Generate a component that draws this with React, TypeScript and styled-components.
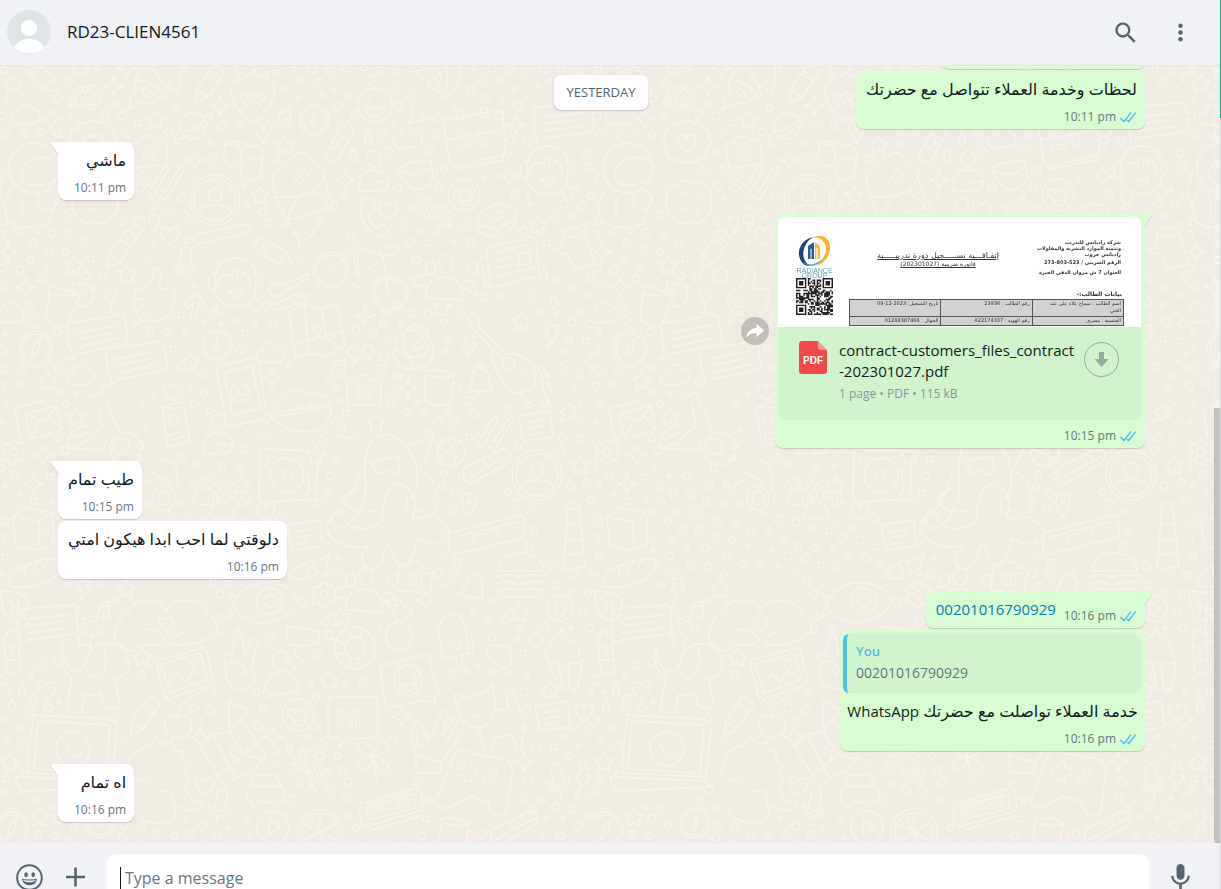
import React from 'react';
import styled, { createGlobalStyle } from 'styled-components';

const GlobalStyle = createGlobalStyle`
  *, *::before, *::after { box-sizing: border-box; }
  html, body, #root { height: 100%; }
  body {
    margin: 0;
    overflow: hidden;
    background: #f0f2f5;
    color: #111b21;
    font-family: 'Open Sans', 'Noto Sans', 'DejaVu Sans', sans-serif;
    font-size: 15px;
  }
  button { border: 0; padding: 0; background: none; color: inherit; font: inherit; cursor: pointer; }
`;

/* ---------- page shell ---------- */

const Shell = styled.div`
  display: flex;
  height: 100vh;
`;

const Column = styled.main`
  display: flex;
  flex: 1;
  flex-direction: column;
  min-width: 0;
`;

const EdgeStrip = styled.div`
  flex: 0 0 1px;
  background: linear-gradient(#00a884 0 118px, #d9dbdd 118px);
`;

const Header = styled.header`
  display: flex;
  flex: 0 0 66px;
  align-items: center;
  gap: 16px;
  padding: 0 26px 1px 7px;
  border-bottom: 1px solid #e6e7ea;
  background: #f0f2f6;
`;

const ContactName = styled.h1`
  flex: 1;
  margin: 0;
  font-size: 17px;
  font-weight: 400;
  line-height: 24px;
`;

const HeaderActions = styled.div`
  display: flex;
  gap: 28px;
  color: #54656f;
`;

const IconButton = styled.button`
  display: flex;
  color: #54656f;
`;

/* ---------- conversation ---------- */

const Chat = styled.section`
  position: relative;
  display: flex;
  flex: 1;
  min-height: 0;
  overflow: hidden;
  background: #efeae2;
`;

const Wallpaper = styled.svg`
  position: absolute;
  inset: 0;
  width: 100%;
  height: 100%;
`;

const Messages = styled.div`
  position: relative;
  display: flex;
  flex: 1;
  flex-direction: column;
  justify-content: flex-end;
  min-width: 0;
  padding: 0 69px 21px 58px;
`;

const DatePill = styled.time`
  position: absolute;
  top: 9px;
  left: 50%;
  transform: translateX(-50%);
  margin-left: -9px;
  padding: 0 13px;
  border-radius: 8px;
  background: #fff;
  box-shadow: 0 1px 1px rgba(11, 20, 26, 0.16);
  color: #54656f;
  font-size: 13px;
  line-height: 35px;
`;

const ScrollTrack = styled.div`
  position: relative;
  display: flex;
  flex: 0 0 6px;
  flex-direction: column;
  justify-content: flex-end;
  background: rgba(255, 255, 255, 0.2);
`;

const ScrollThumb = styled.div`
  height: 56%;
  background: #c5c2be;
`;

const Row = styled.div<{ $out?: boolean; $first?: boolean }>`
  display: flex;
  flex: none;
  align-items: center;
  justify-content: ${(p) => (p.$out ? 'flex-end' : 'flex-start')};
  gap: 6px;
  margin-top: ${(p) => (p.$first ? 13 : 2)}px;
`;

const Bubble = styled.article<{ $out?: boolean; $tail?: boolean; $flush?: boolean }>`
  position: relative;
  padding: ${(p) => (p.$flush ? '4px 4px 0 3px' : '6px 8px 0 10px')};
  border-radius: 8px;
  ${(p) => p.$tail && (p.$out ? 'border-top-right-radius: 0;' : 'border-top-left-radius: 0;')}
  background: ${(p) => (p.$out ? '#d9fdd3' : '#fff')};
  box-shadow: 0 1px 1px rgba(11, 20, 26, 0.17);
`;

const StampOnlyBubble = styled(Bubble)`
  width: 204px;
`;

const TailShape = styled.svg<{ $out?: boolean }>`
  position: absolute;
  top: 0;
  ${(p) => (p.$out ? 'right: -8px;' : 'left: -8px; transform: scaleX(-1);')}
  width: 9px;
  height: 14px;
  overflow: visible;
`;

const ArabicText = styled.p`
  margin: 0;
  font-family: 'Open Sans', 'DejaVu Sans', sans-serif;
  font-size: 16px;
  line-height: 24px;
  white-space: nowrap;
`;

const LatinWord = styled.bdi`
  font-size: 15px;
`;

const Meta = styled.div<{ $inset?: boolean }>`
  display: flex;
  align-items: center;
  justify-content: flex-end;
  gap: 3px;
  height: 28px;
  padding: 4px ${(p) => (p.$inset ? 4 : 0)}px 0 6px;
  color: #667781;
  font-size: 12px;
  line-height: 16px;
  white-space: nowrap;
`;

const PhoneLine = styled.div`
  display: flex;
  align-items: flex-start;
  gap: 2px;
  height: 30px;
`;

const PhoneStamp = styled.div`
  align-self: flex-end;
`;

const PhoneLink = styled.a`
  color: #027eb5;
  font-size: 15px;
  line-height: 22px;
  text-decoration: none;
`;

const Quote = styled.blockquote`
  width: 298px;
  margin: 0;
  padding: 7px 9px 8px;
  border-left: 4px solid #53bdeb;
  border-radius: 6px;
  background: #d1f4cc;
  color: #667781;
  font-size: 14px;
  line-height: 24px;
`;

const QuoteAuthor = styled.strong`
  display: block;
  color: #53bdeb;
  font-size: 13px;
  font-weight: 600;
  line-height: 20px;
`;

const QuoteReply = styled.div`
  padding: 6px 3px 0 0;
`;

const ForwardButton = styled.button`
  display: flex;
  align-items: center;
  justify-content: center;
  width: 28px;
  height: 28px;
  border-radius: 50%;
  background: #c1beb8;
`;

/* ---------- attached document ---------- */

const DocumentCard = styled.div`
  width: 363px;
  overflow: hidden;
  border-radius: 6px;
  background: #d1f4cc;
`;

const Preview = styled.div`
  display: grid;
  grid-template-columns: 37px 1fr;
  gap: 16px;
  height: 110px;
  padding: 18px 17px 0 18px;
  overflow: hidden;
  background: #fff;
  color: #333;
  font-family: 'DejaVu Sans', sans-serif;
  font-size: 6px;
  line-height: 8px;
  white-space: nowrap;
  filter: blur(0.3px);
`;

const BrandColumn = styled.div`
  display: flex;
  flex-direction: column;
  align-items: center;
`;

const BrandName = styled.div`
  color: #5c9cb8;
  font-family: 'Liberation Sans', sans-serif;
  font-size: 7px;
  line-height: 5px;
  text-align: center;
`;

const PaperHead = styled.div`
  display: grid;
  grid-template-columns: 1fr auto;
  height: 64px;
`;

const PaperTitle = styled.div`
  padding: 17px 10px 0 0;
  font-size: 8px;
  text-align: center;
  text-decoration: underline;
`;

const PaperSubtitle = styled.div`
  font-size: 6px;
`;

const PaperIssuer = styled.div`
  padding: 4px 3px 0 0;
  font-size: 5px;
  font-weight: 700;
  line-height: 6px;
  text-align: right;
`;

const IssuerDetail = styled.div`
  line-height: 10px;
`;

const PaperTable = styled.table`
  width: 275px;
  border-collapse: collapse;
  background: #d2d2d2;
  font-size: 5px;
  line-height: 7px;
  table-layout: fixed;

  td { padding: 0 2px; border: 1px solid #555; text-align: right; vertical-align: top; }
  tr:first-child td { height: 17px; }
  tr:last-child td { height: 9px; }
`;

const PaperSection = styled.div`
  padding-right: 2px;
  margin-top: -10px;
  font-size: 6px;
  font-weight: 700;
  line-height: 10px;
  text-align: right;
`;

const FileInfo = styled.div`
  display: flex;
  align-items: flex-start;
  height: 93px;
  padding: 13px 22px 0 21px;
`;

const FileText = styled.div`
  flex: 1;
  min-width: 0;
  padding-left: 12px;
`;

const FileName = styled.div`
  font-size: 15px;
  line-height: 21px;
`;

const FileMeta = styled.div`
  margin-top: 3px;
  color: #8696a0;
  font-size: 12px;
  line-height: 18px;
`;

const DownloadButton = styled.button`
  display: flex;
  margin-top: 2px;
`;

/* ---------- composer ---------- */

const Composer = styled.footer`
  display: flex;
  flex: 0 0 46px;
  align-items: flex-start;
  gap: 18px;
  overflow: hidden;
  padding: 11px 26px 0 15px;
  background: #f0f2f6;
`;

const ComposerIcon = styled(IconButton)`
  flex: none;
  margin-top: 9px;
`;

const InputBox = styled.label`
  display: flex;
  flex: 1;
  align-items: center;
  height: 48px;
  padding-left: 13px;
  border-radius: 9px;
  background: #fff;
`;

const Caret = styled.span`
  width: 1px;
  height: 22px;
  margin-right: 4px;
  background: #111b21;
`;

const TextInput = styled.input`
  flex: 1;
  min-width: 0;
  padding: 0;
  border: 0;
  outline: 0;
  background: none;
  color: #3b4a54;
  font-family: inherit;
  font-size: 16px;
  line-height: 24px;
  &::placeholder { color: #667781; opacity: 1; }
`;

/* ---------- wallpaper doodles ---------- */

const heart = 'M0 9C-14 0-9-10-3-8Q0-7 0-4Q0-7 3-8C9-10 14 0 0 9Z';
const shapes: Record<string, { d: string; r: number }> = {
  star: { r: 11, d: 'M0-9L3-3L9-2L5 3L6 9L0 6L-6 9L-5 3L-9-2L-3-3Z' },
  spark: { r: 12, d: 'M0-10Q1-1 10 0Q1 1 0 10Q-1 1-10 0Q-1-1 0-10Z' },
  heart: { r: 10, d: heart },
  bolt: { r: 12, d: 'M-3-11L6-11L3-4L8-4L-4 11L-2 1L-7 1Z' },
  drop: { r: 8, d: 'M0-7Q7 4 0 6Q-7 4 0-7Z' },
  cloud: { r: 16, d: 'M-11 9C-19 4-12-4-8-3C-7-12 5-13 7-6C16-6 16 6 10 8Q0 11-11 9Z' },
  music: { r: 13, d: 'M-5 7L-3-8L8-11L7 4M-3-4L7-7M-5 7a3 3 0 1 1-2-3M7 4a3 3 0 1 1-2-3' },
  circleUser: { r: 28, d: 'M25 0A25 25 0 1 1-25 0A25 25 0 1 1 25 0M21 0A21 21 0 1 1-21 0A21 21 0 1 1 21 0M7-5A7 7 0 1 1-7-5A7 7 0 1 1 7-5M-17 12Q-12 4 0 5Q12 4 17 12' },
  camera: { r: 20, d: 'M-17-9Q-17-11-14-11H-8L-6-16H5L7-11H14Q17-11 17-8V11Q17 14 14 14H-14Q-17 14-17 11ZM7 1A7 7 0 1 1-7 1A7 7 0 1 1 7 1M3 1A3 3 0 1 1-3 1A3 3 0 1 1 3 1M11-6H13' },
  planet: { r: 20, d: 'M13 0A13 13 0 1 1-13 0A13 13 0 1 1 13 0M-12 5C-24 13-20 16-8 11C4 6 21-5 19-11C18-14 12-10 9-9M-12 5Q2 5 11-6' },
  rosette: { r: 26, d: 'M-6-20Q0-26 6-20Q14-23 16-15Q24-14 21-5Q27 1 20 6Q21 15 13 15Q8 22 1 18Q-6 23-12 16Q-21 16-20 7Q-27 2-22-5Q-24-14-16-15Q-14-22-6-20ZM0 9C-14 0-9-10-3-8Q0-7 0-4Q0-7 3-8C9-10 14 0 0 9Z' },
  rocket: { r: 28, d: 'M-20 20Q-12 10-17 5Q-6 3-12-8Q-8-22 3-25Q17-16 21 4Q12 4 5 12Q-4 7-9 14Q-14 14-20 20ZM-8-12Q10-10 19 7M-4-4Q4-4 6 4Q-2 6-4-4' },
  heartW: { r: 28, d: 'M0 24C-30 4-25-18-12-19L-18-27L-5-22L2-29L4-20L16-27L13-19C27-15 25 5 0 24ZM-13-4L-7 8L0-1L7 8L13-4L8-4L6 0L0-6L-6 0L-8-5Z' },
  glasses: { r: 24, d: 'M-20-14Q-6-16 8-8L12-10M-18-3A9 9 0 1 0-2-1L-4-10L-19-11ZM-1 9A10 10 0 1 0 17 17L20 4L4 3ZM18 18L20-5L13-9' },
  pin: { r: 12, d: 'M0 12Q-9 0-7-5A7 7 0 0 1 7-5Q9 0 0 12ZM2-4A2 2 0 1 1-2-4A2 2 0 1 1 2-4' },
  clock: { r: 18, d: 'M15 0A15 15 0 1 1-15 0A15 15 0 1 1 15 0M12 0A12 12 0 1 1-12 0A12 12 0 1 1 12 0M-1-8Q5 0-1 7M-1-8Q1 0-4 4' },
  bottle: { r: 24, d: 'M-7-12Q-8-17-3-18V-22H3V-18Q8-17 7-12V20Q0 24-7 20ZM-7-6H7M-7 8H7M0-3Q4 3 0 5Q-4 3 0-3' },
  helmet: { r: 44, d: 'M25-14A25 25 0 1 1-25-14A25 25 0 1 1 25-14M24-20Q2-31-10-16Q-19 2 0 3Q20 4 24-9M-28-10Q-38 0-32 16L-26 40Q-10 50 14 42L22 20M-22 6L-30 22M-12 38V14M-31-4L-36-2M-33 4L-38 5M24 18A10 10 0 1 1 4 18A10 10 0 1 1 24 18' },
  cookie: { r: 26, d: 'M-22-4Q-24-14-14-17Q-8-26 0-20Q10-25 15-17Q25-12 22-3Q26 8 17 14Q10 24 0 19Q-10 24-15 15Q-26 10-22-4M-10-6Q-5-12-3-8M8-7L12-4M-6 8Q-4 4 0 8M6 3L10 9' },
  checks: { r: 20, d: 'M-20 6L-16 3L-13 8L0-14L4-12L-12 18ZM-3 10L0 12L16-14L20-12L0 20L-6 17' },
  envelope: { r: 34, d: 'M-28 6L-31-10L-7-33Q0-36 5-31L19-18Q22-15 21-10L29 15Q29 20 23 22L-12 32Q-17 34-19 28ZM-30 10L-6 10L12 4L21-9M-6 10L-15 31M12 4L27 19M-10-4L3-19M-5-2L6-13' },
  userHeart: { r: 24, d: 'M7-16A7 8 0 1 1-7-16A7 8 0 1 1 7-16M-14 16Q-17-3-2-5Q15-5 15 8Q15 17 8 16ZM7 16C-3 9 0 5 4 6Q7 7 7 9Q8 5 12 6Q18 9 7 16' },
  cup: { r: 20, d: 'M-20-6Q-8-15 14-14L16 4Q12 14-2 15Q-13 11-20-6ZM-18-4Q-2 4 14-7M16-6Q24-4 18 2' },
  calendar: { r: 34, d: 'M-30-22L24-31L30-30L32 12L-18 25L-23 22ZM-27-2L27-12M-17-32H-10V-22H-16ZM7-34H14V-25H8ZM30 12V18L-18 27' },
  loveFace: { r: 19, d: 'M16 0A16 16 0 1 1-16 0A16 16 0 1 1 16 0M-6 3C-14-2-11-7-7-5Q-4-8-2-4ZM6 0C0-5 2-9 6-6Q12-8 11-3ZM-5 5Q3 8 8 4Q7 12 0 11Z' },
  smile: { r: 19, d: 'M17 0A17 17 0 1 1-17 0A17 17 0 1 1 17 0M-10 2Q0 6 10 2Q8 11 0 11Q-8 11-10 2M-6-5V-2M6-5V-2' },
  monkey: { r: 32, d: 'M-20-4Q-20-26 2-26Q22-25 21-2Q21 20 4 22Q-14 23-20 8ZM-18-12Q-29-10-26 3Q-24 8-19 8M20-12Q28-12 26-1Q24 5 20 4M-18 2Q-16-12-4-9Q0-16 8-12Q18-8 14 4M-4-9L-2-4M3-11L2-5M8-12L6-5M-7 6Q0 11 8 5Q6 13 0 13ZM-18 20Q-22 30-14 32Q-8 30-9 21M14 18Q17 29 25 25Q28 17 20 14' },
  donut: { r: 22, d: 'M-20 5Q-19-11 2-15Q22-15 19 2Q12 18-8 17Q-20 16-20 5ZM-20 4Q-14 10-11 6Q-7 14-4 7Q2 14 5 6Q10 8 19-3M5-3Q1 3-5 0Q-4-6 3-7Q6-7 5-3M-12-4L-10-5M12-8L10-7' },
  speech: { r: 32, d: 'M-30-12Q-31-15-27-16L24-20Q28-20 28-16L30 4Q30 8 26 9L-21 15L-28 20L-27 12Q-30 9-30 5ZM-22-6L20-10M-22 1L14-3M-20 8L20 3' },
  handset: { r: 24, d: 'M-10-18Q-2-20 0-13V-6L-6-3Q-4 8 2 12L7 8Q16 12 14 17Q8 24-2 16Q-20 0-10-18Z' },
  bar: { r: 32, d: 'M-28 2Q-32 10-24 11L24 0Q30-4 28-8Q26-10 22-9ZM-22 5H-21M-14 4H-13M-6 2H-5M2 1H3' },
  pencil: { r: 23, d: 'M-7-19Q0-24 7-19V10L0 22L-7 10ZM-7-13H7M-7-9H7M-7 10H7' },
  arrow: { r: 13, d: 'M-11-6L11-6L-6 9L-5 0Z' },
  arrowUp: { r: 14, d: 'M0-13L11 2L7 5L2-2V13H-3V-2L-8 5L-12 2Z' },
  mic: { r: 20, d: 'M-5-13Q0-20 5-13V2Q0 9-5 2ZM-11 0Q-10 12 0 12Q10 12 11 0M0 12V20M-8 0Q-7 9 0 9Q7 9 8 0' },
  drink: { r: 26, d: 'M-14-15L16-5L3 26Q-8 28-18 19ZM-16-5L12-5M6-8A12 12 0 1 1 14 6M8-7L16-15M8-7L20-8M8-7L9-19' },
  glass: { r: 15, d: 'M-5-10H5Q6 0 0 1Q-6 0-5-10M0 1V13M-5 13H5' },
  thumb: { r: 30, d: 'M-16-3Q-6-4-1-16L0-25Q8-29 8-16L6-5L16-6Q24-5 22 2L18 20Q5 30-12 26Q-20 22-15 17Q-22 13-17 9Q-23 3-17 1Q-19-3-16-3ZM-16 5H-6M-14 13H-5M-12 20H-4' },
  keys: { r: 22, d: 'M-20 0Q-16-10-7-5L20-16V-11L-2 0Q-6 9-16 5ZM-14 14L2 7Q12 2 16 7L20 4Q19 16 8 14L-14 20Z' },
  bicycle: { r: 50, d: 'M-12 6A18 18 0 1 1-48 6A18 18 0 1 1-12 6M-15 6A15 15 0 1 1-45 6A15 15 0 1 1-15 6M47 30A18 18 0 1 1 11 30A18 18 0 1 1 47 30M44 30A15 15 0 1 1 14 30A15 15 0 1 1 44 30M-30 6L-2-21L-9-29Q-17-35-12-24M0-17L22-8L27 29M-4-14L-2 12L22-6M-7-11L-5 14M-9 20L0 25M20-10Q18-18 26-18L37-17Q39-12 34-9L20-9' },
  people: { r: 32, d: 'M7-16A7 9 0 1 1-7-16A7 9 0 1 1 7-16M-20-12A5 6 0 1 1-20-11M22-12A5 6 0 1 1 22-11M-20 18Q-20-2-2-3Q18-2 17 20ZM-19 6L-32 6Q-32-6-16-5M17 8L31 15Q30-2 18 1' },
  newspaper: { r: 32, d: 'M-24-16L20-27Q24-27 25-22L28 12L-20 24L-26 22L-30-6L-24-8ZM-24-8L-20 24M-18-11L14-19M-17-3L0-7M-15 4L2 0M-14 12L23 4M7-10L18-12L20-1L8 2Z' },
  pot: { r: 26, d: 'M-12-20Q0-28 10-20L20 12L-1 18L-7 2Q-18 2-25-4Q-14 0-12-10ZM-11-17Q1-12 10-20' },
  compass: { r: 22, d: 'M17 2A17 18 0 1 1-17 2A17 18 0 1 1 17 2M14 2A14 15 0 1 1-14 2A14 15 0 1 1 14 2M5-9L2 5L-5 11L-2-2ZM-4-16V-20H4V-16' },
  map: { r: 34, d: 'M-28-22L-12-28L5-24L20-29L28 12L10 23L-7 21L-22 25ZM-26 12L28-2M8 4L26 17M-12-28L-9 20M5-24L8 4M0 4Q-7-6 0-8Q7-6 0 4' },
  flower: { r: 24, d: 'M-16-13Q4-25 14-10Q26 7 8 19Q-16 28-22 5Q-18 0-20-10ZM12-6A12 12 0 1 1-10-8A12 12 0 1 1 12-6M-2 0Q8-18 10-6Q6 4-2 0M-21 2Q-4 5-2 18' },
  guitar: { r: 52, d: 'M-38-35L-30-41L-25-35L-27-28L2 1Q12-4 24 8Q38 25 24 36Q8 43 2 34Q-6 22-12 9Q-16-5-6-10ZM10 10A6 6 0 1 1-2 10A6 6 0 1 1 10 10M14 20L20 14M-34-27L-2 6M26 8Q38 16 38 34L46 52Q24 56 14 37M36 12L46 24L40 20L48 42' },
  phone: { r: 34, d: 'M-20-26L11-34Q16-34 18-29L25 20Q24 26 20 27L-8 34Q-13 34-15 29L-24-20Q-24-24-20-26ZM-17-19L11-26L20 16L-8 23ZM8 0A9 9 0 1 1-10 0A9 9 0 1 1 8 0M-4-4Q-2 5 5 3' },
  lips: { r: 34, d: 'M-32 12Q-12-8-8-12Q0-14 6-9Q22-12 30-4Q29 4-4 6ZM-30 14Q-2 12 30 2Q34 14 20 26Q-6 36-30 14M-10 4L-6 8L0 2L6 6L12 0' },
  mug: { r: 22, d: 'M-14-16Q0-20 14-12L10 16Q-2 22-16 14ZM-13-13Q0-7 13-11M13-4Q22-4 19 4Q15 9 11 6' },
  bell: { r: 18, d: 'M-12 10Q-7 2-8-6Q-7-14 0-14Q8-13 9-5Q9 2 13 8ZM-3-14V-17H3V-14M-4 10Q0 15 5 9' },
  mail: { r: 24, d: 'M-22-11L8-20L11-13M-22-11L-17 18L-10 16M-12-6L20-14L25 10L-6 19ZM-12-6L8 1L20-14M-6 19L2 0M25 10L12-5' },
  scooter: { r: 38, d: 'M-12-32L0-38L6-24L18 4M-4-26L0-2Q-12 2-16 12L-36 18Q-34-4-14-4M18 4A16 16 0 1 1 16 5M14 10A8 8 0 1 1 13 11M-30 8L-14 2M-36 18L2 20L5 10' },
  passport: { r: 26, d: 'M-14-19L4-26L8-20L14 14L-8 20ZM-14-19L8-20M3-7A5 5 0 1 1-7-7A5 5 0 1 1 3-7M-6 8L6 5L7 10L-5 13Z' },
  gear: { r: 16, d: 'M-3-12H3L4-8L9-10L12-5L9-1L12 4L8 9L4 7L2 12H-4L-5 7L-10 9L-12 3L-8 0L-12-6L-8-9L-4-7ZM4 0A4 4 0 1 1-4 0A4 4 0 1 1 4 0' },
  turntable: { r: 38, d: 'M-28-26L28-24Q31-22 30-18L28 24L-26 27Q-30 26-29 20ZM16 0A17 17 0 1 1-18 0A17 17 0 1 1 16 0M4 0A5 5 0 1 1-6 0A5 5 0 1 1 4 0M19-6L22 14L17 22M-22-18L-20-12L-23-8' },
  flamingo: { r: 50, d: 'M-22 22Q-28-30-4-33Q20-30 28-2Q32 26 22 32M-22 22Q-28 58-52 62Q-62 46-48 44Q-36 30-28 2M-18-6L10-10L12 4Q6 12-2 3Q-12 10-14 0ZM20-22Q30-22 46-35Q40-10 32 0M30 4Q50 8 50 40Q44 54 30 42Q14 58 20 28M-30 22A18 10 0 1 0-12 44' },
  ball: { r: 18, d: 'M14 0A14 14 0 1 1-14 0A14 14 0 1 1 14 0M-13-4Q0 2 12 8M-3-13Q6 0 4 13M-12 8Q0-8 10-10' },
  note: { r: 20, d: 'M-17-11L15-16Q17-15 16-10L18 10L-12 14ZM-9-4L8-7M-8 2L8-1M-7 8L4 6' },
  shoe: { r: 24, d: 'M-24-2L12-20Q18-23 22-18Q24-10 18-6L-18 14Q-26 10-24-2ZM-20 8L20-14M-6-10L0-4M0-13L6-7M7-16L12-10' },
  headphones: { r: 26, d: 'M-12-8L8 4M-1-20Q10-22 14-10L15 12M12 18A11 12 0 1 1-10 18A11 12 0 1 1 12 18M7 18A6 7 0 1 1-5 18A6 7 0 1 1 7 18M-24 12Q-22 0-12 0' },
  paw: { r: 20, d: 'M-11 4Q0-13 12 4Q16 15 0 12Q-15 15-11 4M-14-6A3 4 0 1 1-14-5M-5-12A3 4 0 1 1-5-11M7-12A3 4 0 1 1 7-11M16-5A3 4 0 1 1 16-4' },
  box: { r: 26, d: 'M-19-15L-8-24L20-20L22 10L8 18L-16 15ZM-19-15L7-10L20-20M7-10L8 18M12 2L18 0' },
  bread: { r: 28, d: 'M-24 14Q-30 4-14-6Q8-16 26-14Q30-6 18 6Q0 16-24 14ZM-10 2Q-12-8-4-8M0 0Q-2-11 5-11M10-2Q8-12 15-13' },
  leaf: { r: 18, d: 'M-14-14Q16-14 13 2Q14 10 2 16Q-14 14-14-14ZM-9-8L16 20M-3 0V9M3-4L4 4' },
  hands: { r: 52, d: 'M-50 20Q-56 4-38-10Q-28-26-18-20Q-5-24 0-10Q6-25 26-21Q38-20 42-8Q60 4 42 16Q24 26 4 22Q6 12 20 10M-50 20Q-32 36-26 22Q-4 26-1 18Q-10 4-24 8M0 8C-12 0-6-8 0-2Q6-8 8-1Q6 5 0 8' },
  eye: { r: 34, d: 'M-33 2Q-25-20 0-20Q24-20 32-2Q24 16-2 20Q-24 20-33 2ZM17-2A13 13 0 1 1-9-2A13 13 0 1 1 17-2M10-2A6 6 0 1 1-2-2A6 6 0 1 1 10-2M-33 2L-38-10L-30-5M-33 2L-38 14L-30 10' },
  burger: { r: 26, d: 'M-23-6Q-22-24 0-24Q22-22 22-6ZM-25 0Q-12-6-4 1Q6-5 26-1M-24 6Q-10 2-4 8Q10 3 24 5M-22 12H22Q21 20 10 20H-14Q-22 19-22 12M-8-15H-6M2-18H4M9-13H11' },
  cursor: { r: 16, d: 'M13 0A13 13 0 1 1-13 0A13 13 0 1 1 13 0M-4-7L7 1L2 3L4 8L1 9L-1 4L-5 6Z' },
  fish: { r: 20, d: 'M-20 8Q-10-8 10-8L20-14L15 2L18 8L8 4Q-6 16-20 8ZM-14 5H-13M-4-4L0 6M3-6L6 3' },
  book: { r: 38, d: 'M-38-2L34-20Q37-20 37-16L38 2L-34 20L-38 16ZM-32 2L30-13M-14 6L-12 1L10-5L12 0' },
  lighthouse: { r: 34, d: 'M-10 34L-5-26L6-27L12 32ZM-8-26Q0-38 8-28M-8-10L8-12M-9 6L9 4M-10 20L11 18' },
  octopus: { r: 52, d: 'M-10-10Q-8-50 8-48Q30-40 20-12Q52-22 58 2Q48 20 26 6Q20 40 4 30Q0 14-6 12Q-10 42-28 36Q-34 22-22 14Q-60 20-66-8Q-50-30-46-8Q-30 2-10-10Z' },
  cherry: { r: 28, d: 'M0 28A13 14 0 1 1 2 28M0 0Q-6-12-12-20Q2-28 6-14Q12-22 14-10L4 0' },
  buoy: { r: 26, d: 'M20 0A20 21 0 1 1-20 0A20 21 0 1 1 20 0M10 0A10 11 0 1 1-10 0A10 11 0 1 1 10 0M-8-19L-4-10M8-19L4-10M19-6L10-3M19 7L10 4M5 20L3 10M-7 20L-4 10M-19 6L-10 4M-19-7L-10-3M18-10L26-20M-18-10L-26-8' },
  camcorder: { r: 20, d: 'M-16-10L8-8Q10-7 10-4L16-7V8L9 4Q9 8 6 9L-14 8Q-17 0-16-10ZM-11-5H-10' },
  popsicle: { r: 28, d: 'M-17-12Q-12-28 3-26Q17-14 18 12L-12 20ZM3-26Q14-8 13 14M-8-4L-4-6M4-8L7-6M-4 4Q2 8 5 2Q5 11 0 9M2 18V28H7V16' },
  cupcake: { r: 30, d: 'M-18-2Q-22-10-13-14Q-14-23-5-25L-3-32Q2-22 10-18Q18-10 14-4Q20 0 18 3L14 28Q2 32-4 26ZM-18-2Q-6 8 18 2M-6 3L-1 26M4 4L5 28' },
  dog: { r: 38, d: 'M-36-34Q-36-14-24-6Q-16-8-12-16Q-8-34 8-34Q28-36 31-14Q30 0 16 0L22 26Q18 34 6 28L2 14Q-6 20-14 16L-16 34Q-26 38-32 30L-26 0Q-42-12-36-34ZM-12-16Q-14 0-2 0Q12-8 6-30M18-16H19M26-18H27' },
  photo: { r: 32, d: 'M-28-14L18-27Q22-26 23-22L30 8L-14 24Q-19 24-20 20ZM-23-11L16-22L24 4L-14 18ZM-18 10L-6-2L2 7L10-6L22 6M14-12A4 4 0 1 1 6-12A4 4 0 1 1 14-12M-18 22L-6 32L22 12' },
  peace: { r: 30, d: 'M-14 2L-17-8Q-12-12-9-6L-5-26Q1-30 3-24L4-8L12-24Q18-26 18-20L12 2Q20 20 4 26Q-16 28-14 2ZM-14 2Q-4-6 4 4Q8 12-3 12' },
  person: { r: 24, d: 'M8-16A8 10 0 1 1-8-16A8 10 0 1 1 8-16M-18 20Q-16-4 2-6Q17-4 18 14Z' },
  emojiCard: { r: 36, d: 'M-30-16L14-27Q18-28 19-24L29 12L24 14L26 22L15 18L-20 26Q-24 26-25 22ZM12-2A14 15 0 1 1-16-2A14 15 0 1 1 12-2M-11-6L-6-6M3-8A3 3 0 1 1 3-7M-10 2Q0 4 7 0Q4 11-3 9Z' },
  cat: { r: 40, d: 'M-24-4L-28-20L-16-16L4-22L10-30L14-8Q12 10-4 14Q-20 12-24-4ZM-3 14L2 34H10L12 24L30 20L34 36L40 34L42 8Q36-14 30-24Q22-22 26-10Q28-4 16-4M-14-6H-13M2-8H3M-10 2Q-5 5-1 0' },
  hi: { r: 32, d: 'M-24-22H20Q25-22 25-17V14Q25 19 20 19H-6L-14 28V19H-20Q-25 19-25 14V-17Q-25-22-20-22Z' },
  play: { r: 20, d: 'M-8-14L12-4L-8 12Z' },
  apple: { r: 18, d: 'M0-8Q-14-12-13 2Q-10 14 0 13Q14 12 13 0Q12-12 0-8ZM0-8Q-2-14 3-16' },
  laptop: { r: 50, d: 'M-40-42L36-38Q44-36 43-30L38 20L-44 16Q-48 10-42-30ZM-36-36L36-32L32 16L-40 12ZM-58 20L40 24L42 30L-48 34Q-58 30-58 20M16-8A17 17 0 1 1-18-8A17 17 0 1 1 16-8M-8-16Q-6 2 8-2' },
  dino: { r: 44, d: 'M-34-6Q-34-30-10-34L-6-42L2-34L10-38L14-28L20-28L20-18L26-14L22-6L28 0L22 8L30 22L42 26Q30 38 10 24Q20 44-4 44Q-20 44-28 32M-30 0Q-20 4-14-2M-4 14Q8 8 12 18M-10-20H-8' },
  clover: { r: 24, d: 'M0 0Q-20-6-14-14Q-4-18 0 0Q4-20 14-14Q20-4 0 0Q20 4 14 14Q6 18 0 0Q-4 18-14 12Q-18 2 0 0M0 0L4 24' },
  okHand: { r: 34, d: 'M-16 12Q-26-14-14-22Q-6-10-2-2L10-32Q16-34 14-24L10-8L22-26Q28-26 24-18L14-2L26-12Q30-10 26-4L10 18L8 30H-16ZM-16 12Q0 18 10 18M-14-14Q-20 0-8 4Q2-2-14-14' },
  gamepad: { r: 44, d: 'M-24-26Q-18-36-6-28L22-24Q36-22 34-8L28 32Q14 40 10 20L-8 14L-30 26Q-44 28-40 14ZM-14-20V-14H-20V-7H-14V-1H-7V-7H-1V-14H-7V-20ZM19-9A4 4 0 1 1 11-9A4 4 0 1 1 19-9M13 0A4 4 0 1 1 5 0A4 4 0 1 1 13 0' },
  car: { r: 24, d: 'M-16-4L-11-15H9L16-4Q20 0 18 12H12V16H7V12H-9V16H-14V12H-19Q-20 0-16-4ZM-16-4H16M-9 4H-12M9 4H12' },
  playCircle: { r: 20, d: 'M16 0A16 16 0 1 1-16 0A16 16 0 1 1 16 0M-4-7L8 0L-4 7Z' },
  orange: { r: 26, d: 'M23 0A23 23 0 1 1-23 0A23 23 0 1 1 23 0M19 0A19 19 0 1 1-19 0A19 19 0 1 1 19 0M0-17V17M-15-8L15 8M-15 8L15-8M-8-15L8 15' },
  alarm: { r: 34, d: 'M-30-4L26-20Q30-20 31-16L33 2L-22 18Q-28 18-30 14ZM-18 22L30 8M-24-1L24-14L26 0L-21 12Z' },
  quotes: { r: 16, d: 'M-3-6Q-12-12-13-3Q-12 3-6 1Q-6 6-9 10Q0 4-3-6M12-9Q3-14 2-5Q4 1 9-2Q8 4 6 7Q14 0 12-9' },
};

type Doodle = [string, number, number, number?];
const doodles: Doodle[] = [
  ['star', 13, 83], ['pencil', 42, 77, -45], ['star', 80, 67], ['spark', 127, 68], ['spark', 114, 86], ['rocket', 146, 92],
  ['arrow', 177, 85, -40], ['pencil', 208, 85, 35], ['heartW', 253, 98], ['spark', 220, 106], ['music', 283, 118],
  ['cloud', 26, 115], ['spark', 51, 119], ['rosette', 93, 143], ['planet', 193, 126], ['star', 155, 120], ['camera', 150, 152, -8],
  ['spark', 195, 160], ['glasses', 243, 155], ['pin', 263, 131], ['star', 285, 145], ['clock', 314, 120], ['bottle', 340, 142, 28],
  ['drop', 368, 138], ['drop', 353, 156], ['helmet', 34, 182], ['cookie', 95, 203], ['checks', 165, 180], ['circleUser', 215, 200],
  ['star', 260, 195], ['envelope', 303, 187], ['spark', 345, 180], ['userHeart', 374, 175], ['cup', 417, 175], ['cloud', 408, 138],
  ['smile', 375, 105], ['calendar', 473, 142], ['spark', 516, 125], ['spark', 509, 176], ['loveFace', 464, 195], ['monkey', 547, 172],
  ['donut', 497, 219], ['speech', 564, 123], ['star', 538, 225], ['arrow', 418, 118, 30], ['spark', 8, 252], ['rocket', 438, 78, 60],
  ['handset', 374, 216], ['heart', 388, 210], ['quotes', 147, 225], ['heart', 170, 236], ['bar', 223, 233], ['pencil', 120, 250, 35],
  ['arrow', 304, 238], ['pencil', 274, 253, -60], ['mic', 186, 263], ['monkey', 235, 284], ['star', 74, 265], ['star', 127, 274],
  ['drink', 64, 300], ['glass', 111, 300], ['thumb', 153, 294], ['arrowUp', 196, 305, 10], ['keys', 288, 290], ['bicycle', 361, 264],
  ['people', 446, 280], ['newspaper', 511, 264], ['pot', 575, 252], ['drop', 544, 275], ['drop', 554, 302], ['spark', 26, 287],
  ['cloud', 10, 313], ['compass', 36, 347], ['speech', 98, 337, -5], ['speech', 137, 363, -5], ['clock', 217, 345], ['star', 190, 362],
  ['cloud', 271, 353], ['map', 317, 333], ['spark', 365, 315], ['star', 442, 307], ['flower', 415, 348], ['guitar', 505, 354],
  ['star', 521, 321], ['bolt', 552, 336], ['bolt', 470, 347], ['cloud', 81, 375], ['star', 48, 380], ['phone', 241, 392], ['spark', 272, 378],
  ['lips', 300, 403], ['music', 337, 370], ['camera', 364, 391], ['mug', 440, 387], ['spark', 408, 388], ['bell', 480, 382], ['heart', 173, 392],
  ['quotes', 361, 356], ['mail', 37, 420], ['scooter', 102, 430], ['passport', 176, 427], ['star', 76, 417], ['userHeart', 218, 438],
  ['gear', 13, 452], ['spark', 43, 455], ['turntable', 288, 475], ['star', 316, 455], ['star', 376, 422], ['arrow', 348, 435, 45],
  ['flamingo', 388, 467], ['ball', 451, 452], ['checks', 494, 430], ['note', 535, 427], ['bolt', 567, 415, 30], ['shoe', 488, 470],
  ['circleUser', 537, 475], ['star', 580, 465], ['spark', 592, 362], ['headphones', 163, 480], ['paw', 205, 492], ['paw', 222, 506],
  ['pin', 469, 505], ['star', 241, 485], ['spark', 33, 484], ['heart', 266, 512], ['box', 32, 532], ['bread', 35, 573], ['leaf', 15, 605],
  ['speech', 48, 625], ['bolt', 84, 590], ['star', 126, 588], ['music', 102, 612], ['hands', 166, 622], ['eye', 266, 603], ['gear', 324, 595],
  ['people', 366, 592], ['camera', 415, 578, 5], ['bell', 473, 588, 15], ['burger', 521, 577], ['spark', 426, 600], ['cursor', 560, 608],
  ['star', 341, 617], ['star', 519, 612], ['fish', 310, 568], ['book', 487, 535], ['lighthouse', 573, 535], ['octopus', 392, 532],
  ['note', 304, 536], ['cherry', 398, 622], ['buoy', 355, 648], ['camcorder', 303, 637], ['popsicle', 455, 640], ['cupcake', 564, 660],
  ['star', 536, 640], ['star', 143, 657], ['star', 85, 638], ['dog', 98, 678], ['photo', 184, 675], ['peace', 240, 663], ['person', 281, 677],
  ['star', 329, 680], ['spark', 295, 661], ['emojiCard', 410, 682], ['cloud', 501, 655, 50], ['bottle', 12, 652, -5], ['heart', 47, 690],
  ['drop', 22, 690], ['drop', 12, 706], ['cat', 482, 714], ['note', 552, 717], ['heart', 584, 712], ['spark', 402, 717], ['loveFace', 298, 715],
  ['hi', 353, 719], ['play', 237, 715], ['apple', 178, 725], ['pencil', 143, 717, 35], ['laptop', 74, 757], ['dino', 162, 779], ['map', 235, 755, -25],
  ['spark', 200, 737], ['spark', 273, 737], ['clover', 373, 757], ['okHand', 432, 743], ['gamepad', 478, 782], ['mic', 558, 780, -8],
  ['bolt', 583, 780], ['star', 550, 690], ['heart', 205, 786], ['car', 266, 790], ['mic', 220, 806, 12], ['playCircle', 273, 827],
  ['orange', 320, 832], ['alarm', 390, 808], ['compass', 12, 828], ['star', 40, 817], ['clock', 101, 823], ['spark', 524, 762], ['star', 10, 762],
  ['mug', 455, 835], ['shoe', 515, 832],
];

const TILE_W = 594;
const dots: [number, number, number][] = [];
for (let y = 70, i = 0; y < 850; y += 9) {
  for (let x = 4; x < TILE_W; x += 9, i += 1) {
    const h = (i * 7919 + y * 131) % 97;
    const cx = x + (h % 7) - 3;
    const cy = y + (h % 5) - 2;
    const clear =
      doodles.every(([k, dx, dy]) => Math.hypot(dx - cx, dy - cy) > shapes[k].r * 0.95 + 4) &&
      dots.every(([px, py]) => Math.hypot(px - cx, py - cy) > 12);
    if (clear) dots.push([cx, cy, 2 + (h % 3)]);
  }
}

const lettering: [string, number, number, number, number][] = [
  ['42', 70, 110, 28, -12],
  ['24', 457, 150, 27, -8],
  ['BFF', 410, 210, 25, 30],
  ['Hi', 336, 727, 24, 0],
  ['文', 288, 772, 28, 0],
  ['A', 309, 785, 29, 0],
  ['09:28', 368, 816, 18, -14],
];

const ChatWallpaper = () => (
  <Wallpaper aria-hidden="true">
    <defs>
      <pattern id="doodles" width={TILE_W} height="889" y="-66" patternUnits="userSpaceOnUse">
        <g fill="none" stroke="#f6f2eb" strokeWidth="1.5" strokeLinejoin="round" strokeLinecap="round">
          {doodles.map(([kind, x, y, rot = 0], i) => (
            <path key={i} d={shapes[kind].d} transform={`translate(${x} ${y}) rotate(${rot})`} />
          ))}
          {dots.map(([x, y, r], i) => (
            <circle key={i} cx={x} cy={y} r={r} />
          ))}
          {lettering.map(([word, x, y, size, rot]) => (
            <text
              key={word}
              x={x}
              y={y}
              fontSize={size}
              fontWeight="700"
              fontFamily="'Open Sans', 'Noto Sans CJK SC', sans-serif"
              strokeWidth="1"
              transform={`rotate(${rot} ${x} ${y})`}
            >
              {word}
            </text>
          ))}
        </g>
      </pattern>
    </defs>
    <rect width="100%" height="100%" fill="url(#doodles)" />
  </Wallpaper>
);

/* ---------- icons ---------- */

const Avatar = () => (
  <svg width="44" height="44" viewBox="0 0 44 44" role="img" aria-label="Contact photo">
    <defs>
      <clipPath id="avatar-clip"><circle cx="22" cy="22" r="22" /></clipPath>
    </defs>
    <g clipPath="url(#avatar-clip)">
      <rect width="44" height="44" fill="#dfe5e7" />
      <circle cx="22" cy="18" r="8" fill="#fff" />
      <path d="M7 38C10 31 15 29 22 29s12 2 15 9c-3 3-8 5-15 5s-12-2-15-5z" fill="#fff" />
    </g>
  </svg>
);

const SearchIcon = () => (
  <svg width="27" height="27" viewBox="0 0 24 24" fill="currentColor">
    <path d="M15.9 14.3H15l-.3-.3c1-1.1 1.6-2.7 1.6-4.3 0-3.7-3-6.7-6.7-6.7S3 6 3 9.7s3 6.7 6.7 6.7c1.6 0 3.2-.6 4.3-1.6l.3.3v.8l5.1 5.1 1.5-1.5-5-5.2zm-6.2 0c-2.6 0-4.6-2.1-4.6-4.6s2.1-4.6 4.6-4.6 4.6 2.1 4.6 4.6-2 4.6-4.6 4.6z" />
  </svg>
);

const MenuIcon = () => (
  <svg width="27" height="27" viewBox="0 0 24 24" fill="currentColor">
    <circle cx="12" cy="6" r="2" />
    <circle cx="12" cy="12" r="2" />
    <circle cx="12" cy="18" r="2" />
  </svg>
);

const ReadIcon = () => (
  <svg width="18" height="17" viewBox="0 0 16 15" fill="#53bdeb" role="img" aria-label="Read">
    <path d="M15.01 3.316l-.478-.372a.365.365 0 0 0-.51.063L8.666 9.879a.32.32 0 0 1-.484.033l-.358-.325a.319.319 0 0 0-.484.032l-.378.483a.418.418 0 0 0 .036.541l1.32 1.266c.143.14.361.125.484-.033l6.272-8.048a.366.366 0 0 0-.064-.512zm-4.1 0l-.478-.372a.365.365 0 0 0-.51.063L4.566 9.879a.32.32 0 0 1-.484.033L1.891 7.769a.366.366 0 0 0-.515.006l-.423.433a.364.364 0 0 0 .006.514l3.258 3.185c.143.14.361.125.484-.033l6.272-8.048a.365.365 0 0 0-.063-.51z" />
  </svg>
);

const ForwardIcon = () => (
  <svg width="20" height="18" viewBox="0 0 20 18" fill="#fff">
    <path d="M11.5 1.8v4C5 6.6 2 10.5 1 16c2.5-3.6 6-5 10.5-5v4.2L19 8.5z" />
  </svg>
);

const PdfIcon = () => (
  <svg width="28" height="35" viewBox="0 0 28 35" role="img" aria-label="PDF document">
    <path d="M3 1h16l9 9v21a3 3 0 0 1-3 3H3a3 3 0 0 1-3-3V4a3 3 0 0 1 3-3z" fill="#f44848" />
    <path d="M19 1l9 9h-6a3 3 0 0 1-3-3z" fill="#f5a09a" />
    <text x="14" y="24" fill="#fff" fontFamily="'Liberation Sans', sans-serif" fontSize="10" fontWeight="700" textAnchor="middle">
      PDF
    </text>
  </svg>
);

const DownloadIcon = () => (
  <svg width="35" height="35" viewBox="0 0 35 35">
    <circle cx="17.5" cy="17.5" r="17" fill="none" stroke="#93ab9c" />
    <path d="M15 10h5v7h4.5l-7 8-7-8H15z" fill="#93ab9c" />
  </svg>
);

const SmileyIcon = () => (
  <svg width="29" height="29" viewBox="0 0 24 24" fill="currentColor">
    <path d="M9.153 11.603c.795 0 1.439-.879 1.439-1.962s-.644-1.962-1.439-1.962-1.439.879-1.439 1.962.644 1.962 1.439 1.962zm-3.204 1.362c-.026-.307-.131 5.218 6.063 5.551 6.066-.25 6.066-5.551 6.066-5.551-6.078 1.416-12.129 0-12.129 0zm11.363 1.108s-.669 1.959-5.051 1.959c-3.505 0-5.388-1.164-5.607-1.959 0 0 5.912 1.055 10.658 0zM11.804 1.011C5.609 1.011.978 6.033.978 12.228s4.826 10.761 11.021 10.761S23.02 18.423 23.02 12.228c.001-6.195-5.021-11.217-11.216-11.217zM12 21.354c-5.273 0-9.381-3.886-9.381-9.159s3.942-9.548 9.215-9.548 9.548 4.275 9.548 9.548c-.001 5.272-4.109 9.159-9.382 9.159zm3.108-9.751c.795 0 1.439-.879 1.439-1.962s-.644-1.962-1.439-1.962-1.439.879-1.439 1.962.644 1.962 1.439 1.962z" />
  </svg>
);

const PlusIcon = () => (
  <svg width="27" height="29" viewBox="0 0 27 29" fill="none" stroke="currentColor" strokeWidth="2.6">
    <path d="M13.5 4.5v19M4 14h19" />
  </svg>
);

const MicIcon = () => (
  <svg width="27" height="27" viewBox="0 0 24 24" fill="currentColor">
    <path d="M12 14.942c2 0 3.53-1.53 3.53-3.531V4.35c0-2-1.53-3.531-3.531-3.531S8.469 2.35 8.469 4.35v7.061c0 2 1.53 3.531 3.53 3.531zm6.237-3.53c0 3.531-2.942 6.002-6.237 6.002s-6.237-2.471-6.237-6.002H3.761c0 4.001 3.178 7.297 7.061 7.885v3.884h2.354v-3.884c3.884-.588 7.061-3.884 7.061-7.885z" />
  </svg>
);

const Tail = ({ out }: { out?: boolean }) => (
  <TailShape $out={out} viewBox="0 0 9 14" aria-hidden="true">
    <path d="M0 1v13L8 3Q9 1 6 1z" fill="#0b141a" opacity="0.13" />
    <path d="M0 0v13L8 2Q9 0 6 0z" fill={out ? '#d9fdd3' : '#fff'} />
  </TailShape>
);

const BrandLogo = () => (
  <svg width="35" height="33" viewBox="1 0 33 33">
    <path d="M17 2C8 3 1 11 2 20c1 8 6 11 11 11C7 27 5 21 7 14c2-6 5-10 10-12z" fill="#1f3f86" />
    <path d="M16 2c10-4 18 2 17 12-1 8-6 14-13 17 5-5 9-11 9-18 0-6-5-10-13-11z" fill="#f5b52e" />
    <path d="M4 25c6 7 16 5 24-3-6 9-16 13-24 3z" fill="#4ba9d2" />
    <path d="M11 24V11l6-4v17z" fill="#2a5ba4" />
    <path d="M18 7l5 4v13h-5z" fill="#f3c044" />
    <path d="M14 25V14M20 24V13" stroke="#fff" strokeWidth="1" />
  </svg>
);

const QR_SIZE = 25;
const qrCells: string[] = [];
for (let r = 0; r < QR_SIZE; r += 1) {
  for (let c = 0; c < QR_SIZE; c += 1) {
    const fr = r > 16 ? r - 18 : r;
    const fc = c > 16 ? c - 18 : c;
    const finder = fr < 8 && fc < 8 && !(r > 16 && c > 16);
    const ring = Math.max(Math.abs(fr - 3), Math.abs(fc - 3));
    const on = finder ? ring === 3 || ring < 2 : (r * r * 7 + c * 13 + r * c * 5 + ((r ^ c) % 5)) % 7 < 4;
    if (on) qrCells.push(`M${c} ${r}h1v1h-1z`);
  }
}

const QrCode = () => (
  <svg width="37" height="37" viewBox="0 0 25 25" role="img" aria-label="QR code">
    <path d={qrCells.join('')} fill="#222" />
  </svg>
);

/* ---------- composition ---------- */

const Stamp = ({ time, read, inset }: { time: string; read?: boolean; inset?: boolean }) => (
  <Meta $inset={inset}>
    <time>{time}</time>
    {read && <ReadIcon />}
  </Meta>
);

type TextMessageProps = { text: string; time: string; out?: boolean; first?: boolean; tail?: boolean };

const TextMessage = ({ text, time, out, first, tail }: TextMessageProps) => (
  <Row $out={out} $first={first}>
    <Bubble $out={out} $tail={tail}>
      {tail && <Tail out={out} />}
      <ArabicText dir="rtl">{text}</ArabicText>
      <Stamp time={time} read={out} />
    </Bubble>
  </Row>
);

const ContractPreview = () => (
  <Preview>
    <BrandColumn>
      <BrandLogo />
      <BrandName>RADIANCE<br />GROUP</BrandName>
      <QrCode />
    </BrandColumn>
    <div>
      <PaperHead>
        <PaperTitle dir="rtl">
          إتفـاقـــية تســـــجيل دورة تدريبـــــية
          <PaperSubtitle>فاتورة ضريبية (202301027)</PaperSubtitle>
        </PaperTitle>
        <PaperIssuer dir="rtl">
          شركة راديانس للتدريب<br />
          وتنمية الموارد البشرية والمقاولات<br />
          راديانس جروب
          <IssuerDetail>الرقم الضريبي / 523-803-273</IssuerDetail>
          <IssuerDetail>العنوان 7 ش مروان الدقي الجيزة</IssuerDetail>
        </PaperIssuer>
      </PaperHead>
      <PaperSection dir="rtl">بيانات الطالب:-</PaperSection>
      <PaperTable dir="rtl">
        <tbody>
          <tr>
            <td>اسم الطالب : سماح علاء على عبد<br />الغني</td>
            <td>رقم الطالب : 23936</td>
            <td>تاريخ التسجيل: 2023-12-09</td>
          </tr>
          <tr>
            <td>الجنسية : مصرى</td>
            <td>رقم الهوية : A22174337</td>
            <td>الجوال : 01288387466</td>
          </tr>
        </tbody>
      </PaperTable>
    </div>
  </Preview>
);

export default function App() {
  return (
    <>
      <GlobalStyle />
      <Shell>
        <Column>
          <Header>
            <Avatar />
            <ContactName>RD23-CLIEN4561</ContactName>
            <HeaderActions>
              <IconButton aria-label="Search"><SearchIcon /></IconButton>
              <IconButton aria-label="Menu"><MenuIcon /></IconButton>
            </HeaderActions>
          </Header>

          <Chat>
            <ChatWallpaper />
            <Messages>
              <Row $out>
                <StampOnlyBubble $out>
                  <Stamp time="10:11 pm" read />
                </StampOnlyBubble>
              </Row>
              <TextMessage out text="لحظات وخدمة العملاء تتواصل مع حضرتك" time="10:11 pm" />
              <TextMessage first tail text="ماشي" time="10:11 pm" />

              <Row $out $first>
                <ForwardButton aria-label="Forward"><ForwardIcon /></ForwardButton>
                <Bubble $out $tail $flush>
                  <Tail out />
                  <DocumentCard>
                    <ContractPreview />
                    <FileInfo>
                      <PdfIcon />
                      <FileText>
                        <FileName>contract-customers_files_contract<br />-202301027.pdf</FileName>
                        <FileMeta>1 page • PDF • 115 kB</FileMeta>
                      </FileText>
                      <DownloadButton aria-label="Download"><DownloadIcon /></DownloadButton>
                    </FileInfo>
                  </DocumentCard>
                  <Stamp time="10:15 pm" read inset />
                </Bubble>
              </Row>

              <TextMessage first tail text="طيب تمام" time="10:15 pm" />
              <TextMessage text="دلوقتي لما احب ابدا هيكون امتي" time="10:16 pm" />

              <Row $out $first>
                <Bubble $out $tail>
                  <Tail out />
                  <PhoneLine>
                    <PhoneLink href="tel:00201016790929">00201016790929</PhoneLink>
                    <PhoneStamp>
                      <Stamp time="10:16 pm" read />
                    </PhoneStamp>
                  </PhoneLine>
                </Bubble>
              </Row>

              <Row $out>
                <Bubble $out $flush>
                  <Quote>
                    <QuoteAuthor>You</QuoteAuthor>
                    00201016790929
                  </Quote>
                  <QuoteReply>
                    <ArabicText dir="rtl">
                      خدمة العملاء تواصلت مع حضرتك <LatinWord>WhatsApp</LatinWord>
                    </ArabicText>
                  </QuoteReply>
                  <Stamp time="10:16 pm" read inset />
                </Bubble>
              </Row>

              <TextMessage first tail text="اه تمام" time="10:16 pm" />
            </Messages>
            <DatePill>YESTERDAY</DatePill>
            <ScrollTrack>
              <ScrollThumb />
            </ScrollTrack>
          </Chat>

          <Composer>
            <ComposerIcon aria-label="Emoji"><SmileyIcon /></ComposerIcon>
            <ComposerIcon aria-label="Attach"><PlusIcon /></ComposerIcon>
            <InputBox>
              <Caret />
              <TextInput type="text" placeholder="Type a message" aria-label="Type a message" />
            </InputBox>
            <ComposerIcon aria-label="Record voice message"><MicIcon /></ComposerIcon>
          </Composer>
        </Column>
        <EdgeStrip />
      </Shell>
    </>
  );
}
